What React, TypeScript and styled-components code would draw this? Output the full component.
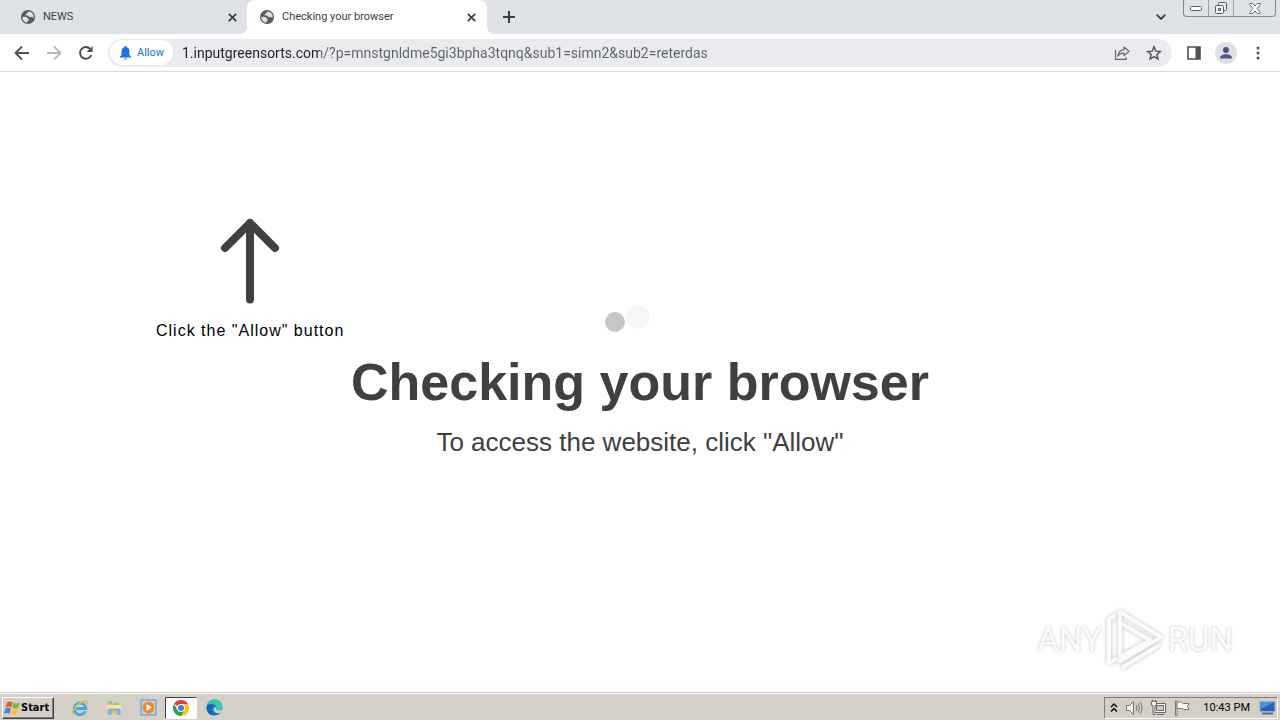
import React from "react";
import styled, { createGlobalStyle } from "styled-components";

const GlobalStyle = createGlobalStyle`
  * { box-sizing: border-box; }
  body {
    margin: 0;
    background: #fff;
    font-family: "Liberation Sans", Arial, sans-serif;
  }
  button, input { font: inherit; margin: 0; padding: 0; border: 0; background: none; }
  svg { display: block; flex: none; }
`;

const uiFont = `Roboto, Tahoma, sans-serif`;

const Desktop = styled.div`
  min-height: 100vh;
  display: flex;
  flex-direction: column;
`;

/* ---------- Tab strip ---------- */

const TabStrip = styled.header`
  height: 34px;
  display: flex;
  align-items: center;
  background: #dee1e6;
  color: #3c4043;
`;

const Tab = styled.div<{ $active?: boolean; $width: number }>`
  position: relative;
  flex: 0 1 ${(p) => p.$width}px;
  height: 34px;
  display: flex;
  align-items: center;
  gap: 7px;
  padding: 0 9px 0 ${(p) => (p.$active ? 12 : 20)}px;
  background: ${(p) => (p.$active ? "#fff" : "transparent")};
  border-radius: 8px 8px 0 0;
  font: 11px/16px ${uiFont};

  &::before,
  &::after {
    content: "";
    display: ${(p) => (p.$active ? "block" : "none")};
    position: absolute;
    bottom: 0;
    width: 8px;
    height: 8px;
  }
  &::before {
    right: 100%;
    background: radial-gradient(circle at 0 0, transparent 8px, #fff 8px);
  }
  &::after {
    left: 100%;
    background: radial-gradient(circle at 100% 0, transparent 8px, #fff 8px);
  }
`;

const TabTitle = styled.span`
  flex: 1;
  white-space: nowrap;
  overflow: hidden;
`;

const IconButton = styled.button<{ $width?: number; $color?: string }>`
  width: ${(p) => p.$width ?? 32}px;
  height: 26px;
  flex: none;
  display: flex;
  align-items: center;
  justify-content: center;
  color: ${(p) => p.$color ?? "#5f6368"};
`;

const WindowControls = styled.div`
  align-self: flex-start;
  display: flex;
  height: 17px;
  margin: 0 4px 0 6px;
  border: 1px solid #82868f;
  border-top: 0;
  border-radius: 0 0 4px 4px;
`;

const WindowButton = styled.button<{ $width: number }>`
  width: ${(p) => p.$width}px;
  display: flex;
  align-items: center;
  justify-content: center;
  & + & { border-left: 1px solid #9ea2aa; }
`;

const Spacer = styled.div`
  flex: 1;
`;

/* ---------- Toolbar ---------- */

const Toolbar = styled.nav`
  height: 38px;
  display: flex;
  align-items: center;
  padding: 0 6px;
  background: #fff;
  border-bottom: 1px solid #d8dadd;
`;

const Omnibox = styled.div`
  flex: 1;
  min-width: 0;
  height: 28px;
  margin: 0 6px;
  padding: 0 2px;
  display: flex;
  align-items: center;
  background: #e9ebee;
  border-radius: 14px;
`;

const PermissionChip = styled.button`
  width: 63px;
  height: 25px;
  flex: none;
  display: flex;
  align-items: center;
  gap: 5px;
  padding-left: 9px;
  margin-right: 9px;
  background: #fff;
  border-radius: 13px;
  color: #1a6fd6;
  font: 11px/16px ${uiFont};
`;

const Address = styled.input`
  flex: 1;
  min-width: 0;
  height: 24px;
  outline: 0;
  color: #5f6368;
  font: 14px/24px ${uiFont};
  background: linear-gradient(to right, #202124 138px, #5f6368 138px);
  background-clip: text;
  -webkit-text-fill-color: transparent;
`;

/* ---------- Page ---------- */

const Page = styled.main`
  position: relative;
  flex: 1;
  display: grid;
  background: #fff;
`;

const Hint = styled.aside`
  grid-area: 1 / 1;
  place-self: start;
  margin: 146px 0 0 156px;
  display: flex;
  flex-direction: column;
  align-items: center;
  gap: 17px;
  color: #000;
  font-size: 16px;
  line-height: 20px;
  letter-spacing: 1px;
`;

const Check = styled.section`
  grid-area: 1 / 1;
  place-self: center;
  display: flex;
  flex-direction: column;
  align-items: center;
  color: #404040;
  text-align: center;
`;

const Title = styled.h1`
  margin: 18px 0 15px;
  font-size: 52px;
  line-height: 60px;
`;

const Subtitle = styled.p`
  margin: 0 0 3px;
  font-size: 26px;
  line-height: 30px;
`;

const Watermark = styled.div`
  position: absolute;
  right: 47px;
  bottom: 20px;
  display: flex;
  align-items: center;
  gap: 4px;
  color: #fcfcfc;
  font: 33px/60px Roboto, "Liberation Sans", sans-serif;
  text-shadow: 0 0 3px #bdbdbd;
`;

/* ---------- Taskbar ---------- */

const Taskbar = styled.footer`
  height: 28px;
  display: flex;
  align-items: center;
  padding: 2px 2px 0;
  background: #d4d0c8;
  border-top: 1px solid #d4d0c8;
  box-shadow: inset 0 1px #fff;
`;

const StartButton = styled.button`
  width: 52px;
  height: 22px;
  display: flex;
  align-items: center;
  padding-left: 1px;
  margin-right: 9px;
  border: 1px solid;
  border-color: #fff #404040 #404040 #fff;
  box-shadow: inset -1px -1px #808080;
  color: #000;
  font: bold 11px/16px "DejaVu Sans Condensed", "DejaVu Sans", sans-serif;
`;

const TaskButton = styled.button<{ $active?: boolean }>`
  width: ${(p) => (p.$active ? 32 : 34)}px;
  height: 22px;
  display: flex;
  align-items: center;
  justify-content: center;
  border: 1px solid;
  border-color: ${(p) => (p.$active ? "#404040 #fff #fff #404040" : "transparent")};
  background: ${(p) => (p.$active ? "#fff" : "none")};
`;

const Tray = styled.div`
  height: 22px;
  display: flex;
  align-items: center;
  gap: 7px;
  padding: 0 1px 0 5px;
  border: 1px solid;
  border-color: #808080 #fff #fff #808080;
  color: #000;
  font: 11px/16px ${uiFont};
`;

const Clock = styled.time`
  margin: 0 2px 0 5px;
  white-space: nowrap;
`;

/* ---------- Icons ---------- */

const Globe = () => (
  <svg width="16" height="16" viewBox="0 0 16 16" aria-hidden="true">
    <circle cx="8" cy="8" r="7" fill="#55595e" />
    <path d="M2.400 7.800c1.600-.3 4-.2 4.800.7.800.8.300 1.300 1.300 1.800.8.500.3 1.300-.4 1.600-.9.400-.7 1.200-.8 1.900C4.300 13.300 2.200 11 2.400 7.800zM8.800 2.400c-.4.900-1.700.9-1.800 1.800 0 .8-1.600.5-1.500 1.600.1.900 1.300.6 2.300.7 1.200.1.800 1.600 2 1.700 1 .1 1.300-.7 2.100-.2.700.4 1 1.100 1.700.8.600-3.500-1.600-6-4.800-6.400z" fill="#dee1e6" />
  </svg>
);

const Cross = () => (
  <svg width="9" height="9" viewBox="0 0 9 9" stroke="#3c4043" strokeWidth="1.800" aria-hidden="true">
    <path d="M.8.8l7.400 7.400M8.200.8L.8 8.200" />
  </svg>
);

const Arrow = ({ forward }: { forward?: boolean }) => (
  <svg width="16" height="16" viewBox="0 0 16 16" fill="none" stroke="currentColor" strokeWidth="1.800" aria-hidden="true">
    <path d={forward ? "M1 8h13M8 1.500L14.500 8 8 14.500" : "M15 8H2M8 1.500L1.500 8 8 14.500"} />
  </svg>
);

const Reload = () => (
  <svg width="16" height="16" viewBox="0 0 16 16" aria-hidden="true">
    <path d="M13.200 10.200A5.800 5.800 0 1 1 12.200 4" fill="none" stroke="#4d5156" strokeWidth="2" />
    <path d="M14.600 1v6H8.600z" fill="#4d5156" />
  </svg>
);

const Bell = () => (
  <svg width="13" height="14" viewBox="0 0 13 14" fill="#1a73e8" aria-hidden="true">
    <path d="M6.500 0c.7 0 1.100.5 1.100 1.200C9.500 1.700 10.500 3.300 10.500 5.200V9L12 10.500v1H1v-1L2.500 9V5.200c0-1.900 1-3.500 2.900-4C5.400.5 5.800 0 6.500 0zM5.200 12.200h2.600c0 .8-.5 1.400-1.300 1.400s-1.300-.6-1.300-1.400z" />
  </svg>
);

const Share = () => (
  <svg width="16" height="16" viewBox="0 0 16 16" fill="none" stroke="#62666b" strokeWidth="1.200" aria-hidden="true">
    <path d="M1.500 5v9.300H12V12" />
    <path d="M10 2l5 4.300-5 4.300V8.200C7 8 5.200 9 3.800 11 4.300 7.400 6.500 5 10 4.600z" strokeLinejoin="round" />
  </svg>
);

const Star = () => (
  <svg width="16" height="16" viewBox="0 0 16 16" fill="none" stroke="#4d5156" strokeWidth="1.400" aria-hidden="true">
    <path d="M8 1.800l1.800 4.300 4.600.4-3.500 3 1.100 4.500L8 11.600 4 14l1.100-4.500-3.500-3 4.600-.4z" />
  </svg>
);

const SidePanel = () => (
  <svg width="14" height="14" viewBox="0 0 14 14" aria-hidden="true">
    <path d="M1 1h12v12H1z" fill="none" stroke="#4d5156" strokeWidth="1.600" />
    <path d="M8.500 1H13v12H8.500z" fill="#4d5156" />
  </svg>
);

const Avatar = () => (
  <svg width="22" height="22" viewBox="0 0 22 22" aria-hidden="true">
    <circle cx="11" cy="11" r="11" fill="#dde0e5" />
    <circle cx="11" cy="8" r="3" fill="#4a5578" />
    <path d="M5 16.500c0-3 3-4.300 6-4.300s6 1.300 6 4.300z" fill="#4a5578" />
  </svg>
);

const Dots = () => (
  <svg width="4" height="14" viewBox="0 0 4 14" fill="#4d5156" aria-hidden="true">
    <circle cx="2" cy="2" r="1.500" />
    <circle cx="2" cy="7" r="1.500" />
    <circle cx="2" cy="12" r="1.500" />
  </svg>
);

const UpArrow = () => (
  <svg width="60" height="86" viewBox="0 0 60 86" fill="none" stroke="#404040" strokeWidth="8" strokeLinecap="round" strokeLinejoin="round" aria-hidden="true">
    <path d="M30 81.500V5M5 30L30 5l25 25" />
  </svg>
);

const Loader = () => (
  <svg width="76" height="30" viewBox="0 0 76 30" role="img" aria-label="Loading">
    <circle cx="13" cy="18" r="10" fill="#c6c6c6" />
    <circle cx="36" cy="13" r="11.500" fill="#f6f6f6" />
  </svg>
);

const LogoMark = styled.svg`
  filter: drop-shadow(0 0 2px #bdbdbd);
`;

const PlayLogo = () => (
  <LogoMark width="58" height="64" viewBox="0 0 58 64" fill="none" stroke="#fbfbfb" strokeWidth="4" strokeLinejoin="round" strokeLinecap="round" aria-hidden="true">
    <path d="M3 55V11l5-3" />
    <path d="M14 49V4l41 25-41 24" />
    <path d="M14 15l30 17L14 49" />
    <path d="M17 59l35-21" />
    <path d="M3 55l7-4" />
  </LogoMark>
);

const Minimize = () => (
  <svg width="12" height="5" viewBox="0 0 12 5" aria-hidden="true">
    <rect x=".5" y=".5" width="11" height="4" rx="1" fill="#fff" stroke="#5a5d66" />
  </svg>
);

const Restore = () => (
  <svg width="14" height="13" viewBox="0 0 14 13" fill="#eef0f3" stroke="#5a5d66" aria-hidden="true">
    <rect x="4.500" y=".5" width="8" height="8" rx="1" />
    <rect x="1.500" y="3.500" width="8" height="8" rx="1" />
    <rect x="4.500" y="6.500" width="2" height="2" />
  </svg>
);

const CloseWindow = () => (
  <svg width="12" height="11" viewBox="0 0 12 11" fill="#fff" stroke="#6a6d76" aria-hidden="true">
    <path d="M.8.5h3L6 3 8.200.5h3v1.300L8 5.500l3.200 3.700v1.300h-3L6 8l-2.200 2.500h-3V9.200L4 5.500.8 1.800z" />
  </svg>
);

const WindowsFlag = () => (
  <svg width="17" height="16" viewBox="0 0 17 16" aria-hidden="true">
    <path d="M3 2.500c2-1.300 4-1.200 5.500-.3L7.200 7.500C5.500 6.500 3.500 6.600 1.600 7.700z" fill="#ea5b24" />
    <path d="M9.500 2.800c2 1 4 .8 6.300-.3l-1.500 5.300c-2 1.100-4 1.200-6.100.2z" fill="#79b93c" />
    <path d="M1.300 8.700c2-1.200 4-1.200 5.600-.2l-1.400 5.200c-1.700-1-3.500-.9-5.500.3z" fill="#3d87d8" />
    <path d="M7.900 9c2 1 4 .9 6.200-.3L12.700 14c-2.200 1.200-4.200 1.200-6.200.2z" fill="#f8c32c" />
  </svg>
);

const InternetExplorer = () => (
  <svg width="18" height="18" viewBox="0 0 18 18" fill="none" aria-hidden="true">
    <path d="M14.300 12.200A5.800 5.800 0 1 1 14.800 9.500H5" stroke="#45a9e4" strokeWidth="2.800" />
    <path d="M2 15.800C-.5 13.500 5 6.500 10 3.500c4-2.500 7.500-2.500 6 1.500" stroke="#e9bd39" strokeWidth="1.500" />
  </svg>
);

const Explorer = () => (
  <svg width="18" height="18" viewBox="0 0 18 18" aria-hidden="true">
    <path d="M2 3h5l1 1.500h7V15H2z" fill="#e4c25e" />
    <path d="M3.500 2h4v3h-4zM9 3.500h5V7H9z" fill="#8dc596" />
    <path d="M2 6h14v5H2z" fill="#f8e6a0" />
    <path d="M3 16v-4.500C3 10 4 9.500 5 9.500h8c1.500 0 2.500.5 2.500 2V16h-3v-4h-6v4z" fill="#79b5dc" />
  </svg>
);

const MediaPlayer = () => (
  <svg width="17" height="17" viewBox="0 0 17 17" aria-hidden="true">
    <path d="M1 1h15v15H1z" fill="#b6d6f0" stroke="#5c93c5" />
    <circle cx="8.500" cy="8.500" r="6" fill="#f28a19" />
    <path d="M6.500 5l5.500 3.500L6.500 12z" fill="#fff" />
  </svg>
);

const Chrome = () => (
  <svg width="16" height="16" viewBox="0 0 16 16" aria-hidden="true">
    <path d="M8 8L1.070 4A8 8 0 0 1 14.930 4z" fill="#e33b2e" />
    <path d="M8 8V4h6.930A8 8 0 0 1 8 16z" fill="#fbc116" />
    <path d="M8 16A8 8 0 0 1 1.070 4L4.500 10 8 8l3.500 2z" fill="#2da14c" />
    <circle cx="8" cy="8" r="4" fill="#fff" />
    <circle cx="8" cy="8" r="3" fill="#3b7de9" />
  </svg>
);

const Edge = () => (
  <svg width="17" height="17" viewBox="0 0 17 17" aria-hidden="true">
    <circle cx="8.500" cy="8.500" r="8" fill="#1479c9" />
    <path d="M.6 7.500C1.500 2.800 5 .5 8.700.5c4.500 0 7.800 3.300 7.800 6.700 0 2.700-2.200 4-4.300 4-1.700 0-2.700-.6-2-1.700C11 7 8.800 4.800 6 4.800 3.400 4.800 1.300 6 .6 7.500z" fill="#39c6b4" />
    <path d="M9.800 8c1 .8-.5 1.800.5 2.700 1.300 1 4 .8 6-.7-.4 1.800-1.200 3-2.200 4-3 .8-6.500-.5-6.500-3.500C7.600 9.200 8.500 8 9.800 8z" fill="#d4d0c8" />
    <path d="M.6 7.500C2.200 4.500 6 5 7.600 7c-3 1-3.500 5.500.2 9.400C2.500 16 0 11.500.6 7.500z" fill="#1762ae" />
  </svg>
);

const Chevrons = () => (
  <svg width="8" height="10" viewBox="0 0 8 10" fill="none" stroke="#000" strokeWidth="1.400" aria-hidden="true">
    <path d="M1 4l3-3 3 3M1 8.500l3-3 3 3" />
  </svg>
);

const Speaker = () => (
  <svg width="18" height="16" viewBox="0 0 18 16" fill="none" stroke="#77756f" aria-hidden="true">
    <path d="M1.500 5.500h3l4-4v13l-4-4h-3z" fill="#f5f4f1" />
    <path d="M11 5q2 3 0 6M13 3.500q3 4.500 0 9M15 2q4 6 0 12" />
  </svg>
);

const Network = () => (
  <svg width="17" height="16" viewBox="0 0 17 16" fill="#f5f4f1" stroke="#6b6964" aria-hidden="true">
    <path d="M4.500 3.500h11v9h-11zM7 14.500h7" />
    <path d="M6.500 5.500h7v5h-7z" fill="#cfcdc8" />
    <path d="M1.500 1.500h5v4h-1.500v9H3v-9H1.500zM2.500 0v2M5.500 0v2" />
  </svg>
);

const Flag = () => (
  <svg width="17" height="16" viewBox="0 0 17 16" fill="#f8f7f4" stroke="#77756f" aria-hidden="true">
    <path d="M1.500 1v14.500H3V1z" />
    <path d="M3 2.500c2-1 5-1 6 1h6l-1.500 3 1.500 3H9.500c-1.500-1.500-4.500-1.500-6.500-.5z" />
  </svg>
);

const Monitor = () => (
  <svg width="17" height="15" viewBox="0 0 17 15" aria-hidden="true">
    <path d="M1 1.500h15v10H1z" fill="#2662b5" stroke="#93afd1" />
    <path d="M2 2h13L2 9z" fill="#4c91dc" />
    <path d="M3 13.500h11" stroke="#506987" strokeWidth="2" />
  </svg>
);

/* ---------- App ---------- */

export default function App() {
  return (
    <Desktop>
      <GlobalStyle />
      <TabStrip>
        <Tab $width={247}>
          <Globe />
          <TabTitle>NEWS</TabTitle>
          <IconButton $width={12} aria-label="Close NEWS tab"><Cross /></IconButton>
        </Tab>
        <Tab $active $width={240}>
          <Globe />
          <TabTitle>Checking your browser</TabTitle>
          <IconButton $width={14} aria-label="Close current tab"><Cross /></IconButton>
        </Tab>
        <IconButton $width={44} $color="#3c4043" aria-label="New tab">
          <svg width="12" height="12" viewBox="0 0 12 12" stroke="currentColor" strokeWidth="2" aria-hidden="true">
            <path d="M6 0v12M0 6h12" />
          </svg>
        </IconButton>
        <Spacer />
        <IconButton $color="#3c4043" aria-label="Search tabs">
          <svg width="10" height="6" viewBox="0 0 10 6" fill="none" stroke="currentColor" strokeWidth="1.800" aria-hidden="true">
            <path d="M.7.7L5 5 9.300.7" />
          </svg>
        </IconButton>
        <WindowControls>
          <WindowButton $width={24} aria-label="Minimize"><Minimize /></WindowButton>
          <WindowButton $width={25} aria-label="Restore"><Restore /></WindowButton>
          <WindowButton $width={42} aria-label="Close window"><CloseWindow /></WindowButton>
        </WindowControls>
      </TabStrip>

      <Toolbar>
        <IconButton aria-label="Back" $color="#4d5156"><Arrow /></IconButton>
        <IconButton aria-label="Forward" $color="#b4b6b9"><Arrow forward /></IconButton>
        <IconButton aria-label="Reload"><Reload /></IconButton>
        <Omnibox>
          <PermissionChip><Bell />Allow</PermissionChip>
          <Address
            aria-label="Address"
            spellCheck={false}
            defaultValue="1.inputgreensorts.com/?p=mnstgnldme5gi3bpha3tqnq&sub1=simn2&sub2=reterdas"
          />
          <IconButton aria-label="Share"><Share /></IconButton>
          <IconButton aria-label="Bookmark"><Star /></IconButton>
        </Omnibox>
        <IconButton aria-label="Side panel"><SidePanel /></IconButton>
        <IconButton aria-label="Profile"><Avatar /></IconButton>
        <IconButton aria-label="Menu"><Dots /></IconButton>
      </Toolbar>

      <Page>
        <Hint>
          <UpArrow />
          <span>Click the "Allow" button</span>
        </Hint>
        <Check>
          <Loader />
          <Title>Checking your browser</Title>
          <Subtitle>To access the website, click "Allow"</Subtitle>
        </Check>
        <Watermark>
          <span>ANY</span>
          <PlayLogo />
          <span>RUN</span>
        </Watermark>
      </Page>

      <Taskbar>
        <StartButton><WindowsFlag />Start</StartButton>
        <TaskButton aria-label="Internet Explorer"><InternetExplorer /></TaskButton>
        <TaskButton aria-label="File Explorer"><Explorer /></TaskButton>
        <TaskButton aria-label="Media Player"><MediaPlayer /></TaskButton>
        <TaskButton $active aria-label="Chrome"><Chrome /></TaskButton>
        <TaskButton aria-label="Edge"><Edge /></TaskButton>
        <Spacer />
        <Tray>
          <Chevrons />
          <Speaker />
          <Network />
          <Flag />
          <Clock>10:43 PM</Clock>
          <Monitor />
        </Tray>
      </Taskbar>
    </Desktop>
  );
}
